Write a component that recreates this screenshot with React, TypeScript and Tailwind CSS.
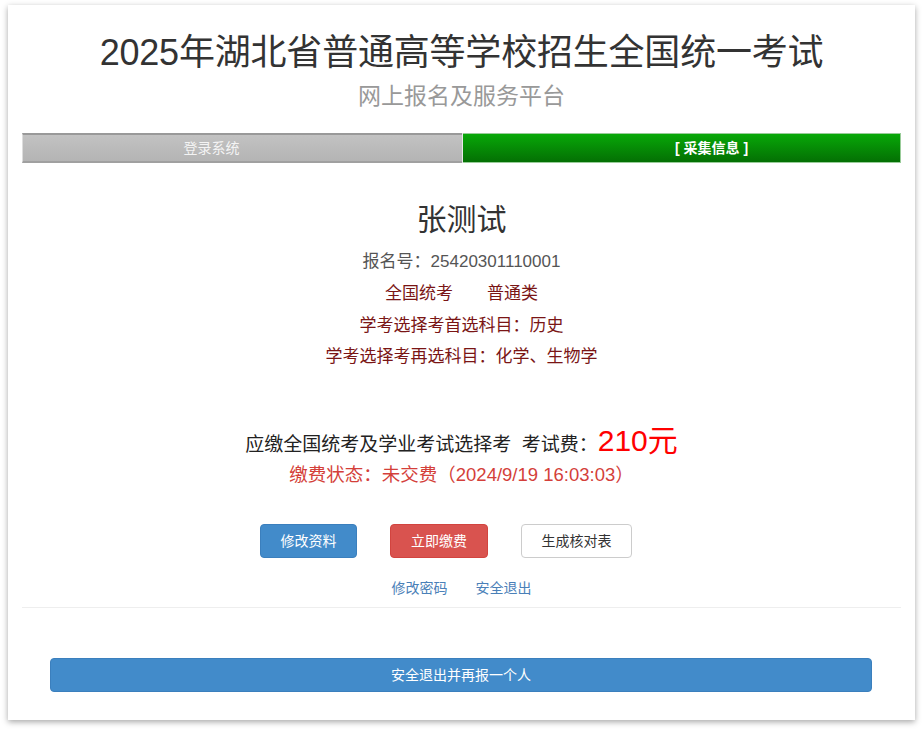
import React from "react";

export default function App() {
  return (
    <div className="min-h-[731px] bg-white pt-[5px] pl-[8px]">
      <div
        className="w-[907px] h-[715px] bg-white px-[14px] shadow-[0_2px_6px_rgba(0,0,0,0.35)] text-[#333]"
        style={{ fontFamily: '"Liberation Sans", "Noto Sans CJK SC", sans-serif' }}
      >
        {/* Header */}
        <div className="pt-[28px] text-center">
          <h1 className="text-[36px] leading-[40px] tracking-[-0.2px] text-[#333]">
            2025年湖北省普通高等学校招生全国统一考试
          </h1>
          <p className="mt-[9px] text-[23px] leading-[28px] text-[#999]">
            网上报名及服务平台
          </p>
        </div>

        {/* Steps */}
        <div className="mt-[23px] flex h-[30px] text-[14px]">
          <div className="flex-1 flex items-center justify-center pr-[62px] border-t-2 border-t-[#999] border-b-2 border-b-[#a0a0a0] border-l border-l-[#ddd] bg-gradient-to-b from-[#c2c2c2] to-[#b4b4b4] text-[#f4f4f4]">
            登录系统
          </div>
          <div className="w-px bg-[#e8e8e8]" />
          <div className="flex-1 flex items-center justify-center pl-[60px] border-t border-t-[#9c9] border-b border-b-[#9c9] border-r border-r-[#9c9] bg-gradient-to-b from-[#08a808] to-[#047004] text-white font-bold">
            [ 采集信息 ]
          </div>
        </div>

        {/* Candidate info */}
        <div className="mt-[39px] flex flex-col items-center">
          <h2 className="text-[30px] leading-[36px] text-[#333]">张测试</h2>
          <p className="mt-[8px] text-[17px] leading-[32px] text-[#555]">
            报名号：25420301110001
          </p>
          <div className="text-[17px] leading-[32px] text-[#7a1515] flex gap-[34px]">
            <span>全国统考</span>
            <span>普通类</span>
          </div>
          <p className="text-[17px] leading-[32px] text-[#7a1515]">
            学考选择考首选科目：历史
          </p>
          <p className="text-[17px] leading-[30px] text-[#7a1515]">
            学考选择考再选科目：化学、生物学
          </p>
        </div>

        {/* Fee */}
        <div className="mt-[52px] flex flex-col items-center">
          <p className="text-[19px] leading-[34px] text-[#222]">
            应缴全国统考及学业考试选择考&nbsp;&nbsp;考试费：
            <span className="text-[30px] text-[#f00]">210元</span>
          </p>
          <p className="mt-[-2px] text-[18.5px] leading-[30px] text-[#d43f3a]">
            缴费状态：未交费（2024/9/19 16:03:03）
          </p>
        </div>

        {/* Actions */}
        <div className="mt-[34px] flex justify-center gap-[33px] pr-[31px] text-[14px]">
          <button className="h-[34px] w-[97px] rounded-[4px] bg-[#428bca] border border-[#3b7fbd] text-white">
            修改资料
          </button>
          <button className="h-[34px] w-[98px] rounded-[4px] bg-[#d9534f] border border-[#d2443f] text-white">
            立即缴费
          </button>
          <button className="h-[34px] w-[111px] rounded-[4px] bg-white border border-[#ccc] text-[#333]">
            生成核对表
          </button>
        </div>
        <div className="mt-[19px] flex justify-center gap-[28px] text-[14px] leading-[22px] text-[#4a80b8]">
          <span>修改密码</span>
          <span>安全退出</span>
        </div>

        <div className="mt-[8px] border-t border-[#eee]" />

        <div className="mt-[50px] pl-[28px] pr-[29px]">
          <button className="h-[34px] w-full rounded-[4px] bg-[#428bca] border border-[#3b7fbd] text-white text-[14px]">
            安全退出并再报一个人
          </button>
        </div>
      </div>
    </div>
  );
}
